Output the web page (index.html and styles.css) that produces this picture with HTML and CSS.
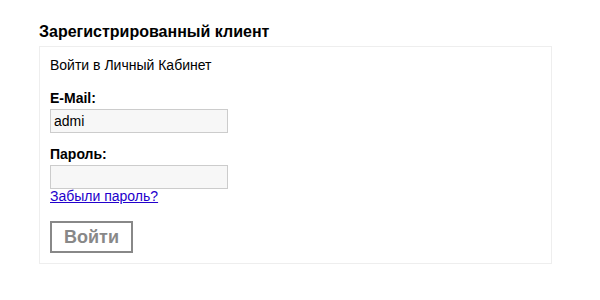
FILE: index.html
```html
<!DOCTYPE html>
<html lang="ru">
<head>
    <meta charset="UTF-8">
    <meta name="viewport" content="width=device-width, initial-scale=1.0">
    <title>Вход</title>
    <link rel="stylesheet" href="styles.css">
</head>
<body>
    <div class="login">
        <h2>Зарегистрированный клиент</h2>
        <div class="login-box">
            <p class="intro">Войти в Личный Кабинет</p>
            <div class="form-group">
                <label for="email">E-Mail:</label>
                <input type="text" id="email" value="admi">
            </div>
            <div class="form-group">
                <label for="password">Пароль:</label>
                <input type="password" id="password">
                <a href="#" class="forgot">Забыли пароль?</a>
            </div>
            <button class="btn">Войти</button>
        </div>
    </div>
</body>
</html>
```

FILE: styles.css
```css
body {
    font-family: "Liberation Sans", Arial, sans-serif;
    font-size: 14px;
    color: #000;
    background: #fff;
    margin: 0;
    padding: 0;
}
.login {
    width: 513px;
    margin: 0 0 0 39px;
    padding-top: 23px;
}
.login h2 {
    font-size: 16px;
    font-weight: bold;
    margin: 0 0 5px 0;
    line-height: 18px;
}
.login-box {
    border: 1px solid #eeeeee;
    padding: 10px 10px 10px 10px;
}
.intro {
    margin: 0 0 17px 0;
    line-height: 16px;
}
.form-group {
    margin-bottom: 13px;
}
.form-group label {
    display: block;
    font-weight: bold;
    line-height: 16px;
    margin-bottom: 3px;
}
.form-group input {
    display: block;
    width: 178px;
    height: 24px;
    box-sizing: border-box;
    border: 1px solid #cccccc;
    background: #f7f7f7;
    font-family: "Liberation Sans", Arial, sans-serif;
    font-size: 14px;
    padding: 0 3px;
    margin: 0;
}
.forgot {
    display: block;
    color: #2200cc;
    line-height: 15px;
}
.form-group:last-of-type {
    margin-bottom: 17px;
}
.btn {
    display: block;
    width: 83px;
    height: 32px;
    box-sizing: border-box;
    border: 2px solid #888888;
    background: #fff;
    color: #888888;
    font-family: "Liberation Sans", Arial, sans-serif;
    font-size: 18px;
    font-weight: bold;
    padding: 0;
    margin: 0;
}
```
